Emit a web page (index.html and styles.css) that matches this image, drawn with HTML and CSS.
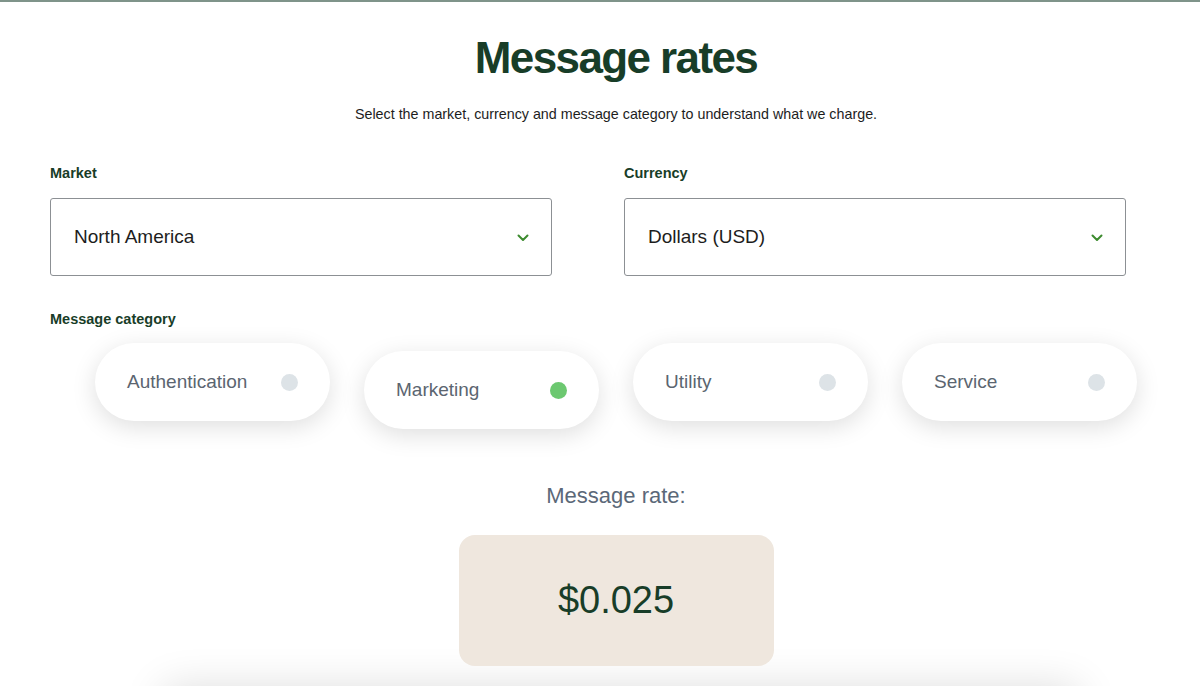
FILE: index.html
```html
<!DOCTYPE html>
<html lang="en">
<head>
<meta charset="utf-8">
<title>Message rates</title>
<link rel="stylesheet" href="styles.css">
</head>
<body>
<main class="page">
  <header class="intro">
    <h1 class="title">Message rates</h1>
    <p class="subtitle">Select the market, currency and message category to understand what we charge.</p>
  </header>

  <section class="selects">
    <div class="field">
      <label class="label">Market</label>
      <div class="select">
        <span class="select-value">North America</span>
        <svg class="chevron" width="12" height="8" viewBox="0 0 12 8"><path d="M1.5 1.5 L6 6 L10.5 1.5" fill="none" stroke="#3d8b2f" stroke-width="2" stroke-linecap="round" stroke-linejoin="round"/></svg>
      </div>
    </div>
    <div class="field">
      <label class="label">Currency</label>
      <div class="select">
        <span class="select-value">Dollars (USD)</span>
        <svg class="chevron" width="12" height="8" viewBox="0 0 12 8"><path d="M1.5 1.5 L6 6 L10.5 1.5" fill="none" stroke="#3d8b2f" stroke-width="2" stroke-linecap="round" stroke-linejoin="round"/></svg>
      </div>
    </div>
  </section>

  <section class="category">
    <div class="label">Message category</div>
    <div class="pills">
      <div class="pill"><span class="pill-text">Authentication</span><span class="dot"></span></div>
      <div class="pill pill-active"><span class="pill-text">Marketing</span><span class="dot dot-on"></span></div>
      <div class="pill"><span class="pill-text">Utility</span><span class="dot"></span></div>
      <div class="pill"><span class="pill-text">Service</span><span class="dot"></span></div>
    </div>
  </section>

  <section class="rate">
    <div class="rate-label">Message rate:</div>
    <div class="rate-box">$0.025</div>
  </section>

  <div class="next-card"></div>
</main>
</body>
</html>
```

FILE: styles.css
```css
* { box-sizing: border-box; }
html, body { margin: 0; padding: 0; background: #fff; overflow: hidden; }
body {
  border-top: 2px solid #7f948a;
  font-family: "Liberation Sans", Arial, sans-serif;
  color: #1d1d1d;
}
.page {
  padding-left: 32px;
  width: 1200px;
  height: 684px;
  overflow: hidden;
}
.intro { text-align: center; }
.title {
  margin: 31px 0 0;
  font-size: 44px;
  line-height: 50px;
  font-weight: 700;
  letter-spacing: -1.6px;
  color: #183d28;
}
.subtitle {
  margin: 22px 0 0;
  font-size: 14.3px;
  line-height: 18px;
  color: #1d1d1d;
}
.selects {
  margin: 42px 0 0 18px;
  display: grid;
  grid-template-columns: 502px 502px;
  column-gap: 72px;
}
.label {
  display: block;
  font-size: 14.5px;
  line-height: 16px;
  font-weight: 700;
  color: #183d28;
}
.select {
  margin-top: 17px;
  height: 78px;
  border: 1px solid #8c9094;
  border-radius: 3px;
  display: flex;
  align-items: center;
  justify-content: space-between;
  padding: 0 22px 0 23px;
}
.select-value { font-size: 19px; color: #1d1d1d; }
.chevron { display: block; margin-top: 2px; }
.category { margin: 35px 0 0 18px; }
.pills {
  margin: 16px 0 0 -18px;
  display: flex;
  justify-content: center;
  align-items: flex-start;
  gap: 34px;
}
.pill {
  width: 235px;
  height: 78px;
  border-radius: 39px;
  background: #fff;
  box-shadow: 0 6px 24px rgba(0, 0, 0, 0.13);
  display: flex;
  align-items: center;
  justify-content: space-between;
  padding: 0 32px 0 32px;
}
.pill-active { margin-top: 8px; }
.pill-text { font-size: 19px; color: #5b6570; }
.dot {
  width: 17px;
  height: 17px;
  border-radius: 50%;
  background: #dde3e7;
}
.dot-on { background: #6cc870; }
.rate {
  margin-top: 54px;
  display: flex;
  flex-direction: column;
  align-items: center;
}
.rate-label {
  font-size: 22px;
  line-height: 26px;
  color: #5b6878;
}
.rate-box {
  margin-top: 26px;
  width: 315px;
  height: 131px;
  border-radius: 16px;
  background: #efe7de;
  display: flex;
  align-items: center;
  justify-content: center;
  font-size: 38px;
  color: #183d28;
}
.next-card {
  margin: 22px 0 0 132px;
  width: 914px;
  height: 200px;
  background: #fff;
  box-shadow: 0 0 40px rgba(0, 0, 0, 0.14);
}
```
